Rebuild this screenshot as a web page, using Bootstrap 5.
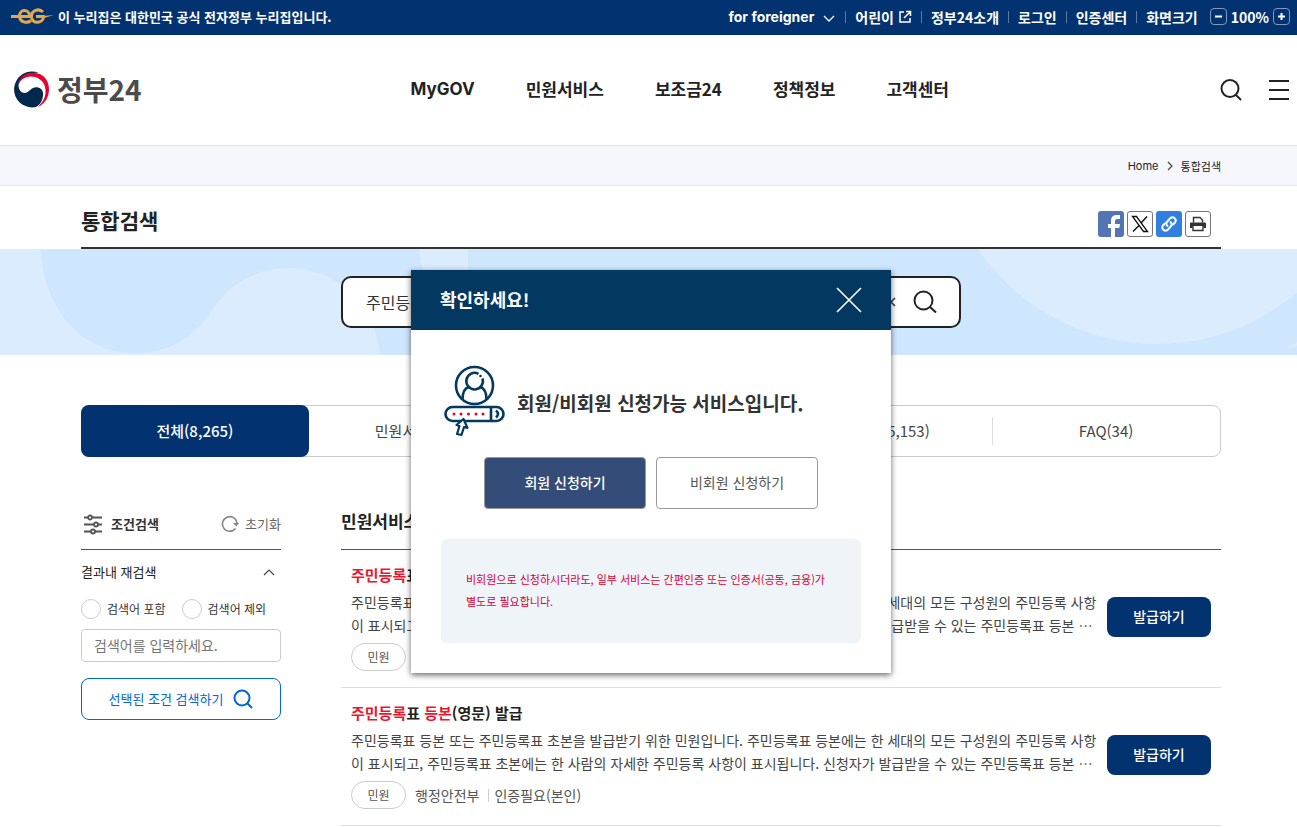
<!DOCTYPE html>
<html lang="ko">
<head>
<meta charset="utf-8">
<meta name="viewport" content="width=device-width, initial-scale=1">
<title>통합검색 | 정부24</title>
<link href="https://cdn.jsdelivr.net/npm/bootstrap@5.3.0/dist/css/bootstrap.min.css" rel="stylesheet">
<style>
  :root { --navy:#033270; --ink:#222; --text:#444; --line:#ddd; }
  body { font-family:"Noto Sans CJK KR",sans-serif; font-size:14px; line-height:20px; color:var(--ink); background:#fff; }
  a { color:inherit; text-decoration:none; }
  svg { display:block; flex:none; }
  .plain { background:none; border:0; padding:0; color:inherit; }
  .frame { max-width:1145px; margin:0 auto; padding-left:5px; }

  /* official notice bar */
  .gov-bar { background:var(--navy); color:#fff; min-height:35px; padding:0 7px 2px 11px; font-weight:700; }
  .gov-note { font-size:13px; }
  .gov-links li { display:flex; align-items:center; }
  .gov-links li + li::before { content:""; width:1px; height:12px; background:#5b7aa5; margin:0 9px; }
  .latin { font-family:Inter,"Noto Sans CJK KR",sans-serif; }
  .zoom-btn { width:17px; height:17px; border:1px solid #8299bb; border-radius:4px; display:grid; place-items:center; }

  /* main header */
  .site-head { height:110px; padding:0 8px 2px 12px; }
  .brand-name { font-size:28px; line-height:36px; font-weight:700; color:#4b4b4b; }
  .gnb { gap:51px; margin-left:269px; font-size:17px; font-weight:700; line-height:24px; }
  .crumbs { background:#f6f7fc; border-top:1px solid #e2e3e8; border-bottom:1px solid #e6e7ea; font-size:11px; }
  .crumbs ol { height:39px; gap:8px; }
  .title-row { height:63px; border-bottom:2px solid #333; padding:0 10px 1px 0; }
  .title-row h1 { font-size:21px; line-height:30px; font-weight:700; padding-top:8px; }
  .share { gap:3px; }
  .share button { width:26px; height:26px; border-radius:3px; display:grid; place-items:center; overflow:hidden; }
  .share .link-btn { background:#3180e0; }
  .share .boxed { border:1px solid #777; background:#fff; }

  /* search band */
  .band { background:#cfe6ff; padding:27px 0; }
  .band-art { position:absolute; inset:0; width:100%; height:100%; }
  .searchbox { width:620px; height:52px; margin:0 auto; border:2px solid var(--ink); border-radius:10px; background:#fff; padding:0 22px 0 23px; }
  .searchbox input { border:0; outline:0; min-width:0; font-size:16px; line-height:24px; color:#333; padding:0; }

  .tabs { height:52px; margin-top:50px; border:1px solid #ccc; border-radius:8px; font-size:15px; color:var(--text); }
  .tabs a { flex:1 1 0; display:flex; align-items:center; justify-content:center; position:relative; }
  .tabs a + a:not(:nth-child(2))::before { content:""; position:absolute; left:0; height:28px; border-left:1px solid var(--line); }
  .tabs a.on { background:var(--navy); color:#fff; border-radius:8px; margin:-1px 0 -1px -1px; font-weight:500; }

  .content { gap:60px; margin-top:42px; }
  .side { width:200px; flex:none; font-size:13px; }
  .sec-head { height:51px; border-bottom:1px solid #555; }
  .side-title { font-size:13px; font-weight:700; color:#333; }
  .reset { gap:6px; color:#666; }
  .side-label { height:43px; font-size:13px; padding-right:6px; }
  .picks { height:32px; margin-bottom:4px; }
  .pick { font-size:12px; gap:6px; color:#333; }
  .pick input { appearance:none; width:20px; height:20px; border:1px solid #ccc; border-radius:50%; margin:0; background:#fff; }
  .pick input:checked { border:6px solid #0067d4; }
  .side-input { height:33px; width:100%; border:1px solid #ccc; border-radius:4px; font-size:14px; padding:0 12px 2px; }
  .side-input::placeholder { color:#757575; }
  .side-go { height:42px; width:100%; border:1px solid #0067d4; border-radius:8px; background:#fff; color:#0067d4; font-size:13px; gap:10px; }

  .sec-head h2 { font-size:17px; line-height:26px; font-weight:700; padding-bottom:6px; }
  .hit { border-bottom:1px solid var(--line); padding:13px 10px 16px; gap:10px; }
  .hit h3 { font-size:15px; line-height:24px; font-weight:700; margin:0 0 4px; }
  .hit em { font-style:normal; color:#ee142f; }
  .hit p { line-height:23px; margin:0 0 6px; color:var(--text); word-break:break-all; }
  .tag { width:55px; height:28px; border:1px solid #ccc; border-radius:14px; font-size:12px; display:grid; place-items:center; color:#555; }
  .facts { gap:9px; color:#555; }
  .facts i { width:1px; height:13px; background:#ccc; margin-right:-4px; }
  .apply { flex:none; width:104px; height:40px; border-radius:8px; background:var(--navy); color:#fff; font-weight:500; padding-bottom:2px; }

  /* service dialog */
  .dialog-layer { position:absolute; top:270px; left:0; right:0; padding-left:5px; }
  .dialog-box { width:480px; margin:0 auto; background:#fff; box-shadow:0 2px 6px rgba(0,0,0,.6); }
  .dialog-top { height:60px; background:#033860; color:#fff; padding:0 29px; }
  .dialog-top h2 { font-size:18px; line-height:26px; font-weight:700; padding-bottom:2px; }
  .dialog-main { padding:35px 30px 30px; }
  .dialog-msg { gap:12px; padding-left:3px; font-size:19px; line-height:28px; font-weight:700; color:#333; }
  .choices { gap:10px; margin-top:20px; }
  .choice { width:162px; height:52px; border:1px solid #999; border-radius:4px; background:#fff; color:#555; padding-bottom:4px; }
  .choice.main-choice { background:#344d78; color:#fff; font-weight:500; }
  .notice { margin-top:30px; background:#eff4f9; border-radius:6px; padding:29px 25px 31px; font-size:11px; line-height:22px; color:#dc0032; }
</style>
</head>
<body>
<div class="gov-bar d-flex align-items-center justify-content-between">
  <div class="d-flex align-items-center gap-1 gov-note">
    <svg width="43" height="17" viewBox="0 0 43 17" fill="none" stroke="#e5a64d" stroke-width="3"><path d="M0 8.500H19M19 8.500C18 0 8 1 8.500 8.500C9 14 16 16 20 12.500"/><path d="M32 4C28 0 20 2 20.500 9C21 17 33 15 32.500 8.500H25"/><path d="M32 8L43 7L33 10Z" fill="#e5a64d" stroke="none"/></svg>
    <span>이 누리집은 대한민국 공식 전자정부 누리집입니다.</span>
  </div>
  <ul class="gov-links list-unstyled d-flex align-items-center mb-0">
    <li><button class="plain latin fw-bold d-flex align-items-center gap-2" type="button">for foreigner <svg width="14" height="14" viewBox="0 0 14 14" fill="none" stroke="#fff" stroke-width="1.300"><path d="M2 6l5 5 5-5"/></svg></button></li>
    <li><a href="#" class="d-flex align-items-center gap-1">어린이 <svg width="14" height="14" viewBox="0 0 14 14" fill="none" stroke="#fff" stroke-width="1.500"><path d="M6 2H2v10h10V8M8 1.500h4.500V6M12 2L6 8"/></svg></a></li>
    <li><a href="#">정부24소개</a></li>
    <li><a href="#">로그인</a></li>
    <li><a href="#">인증센터</a></li>
    <li><span>화면크기</span>
      <div class="d-flex align-items-center gap-1 ms-2 ps-1">
        <button class="plain zoom-btn" type="button" aria-label="화면 축소"><svg width="9" height="9" stroke="#fff" stroke-width="2"><path d="M1 4.500h7"/></svg></button>
        <span>100%</span>
        <button class="plain zoom-btn" type="button" aria-label="화면 확대"><svg width="9" height="9" stroke="#fff" stroke-width="2"><path d="M1 4.500h7M4.500 1v7"/></svg></button>
      </div></li>
  </ul>
</div>

<header class="site-head d-flex align-items-center">
  <a href="#" class="d-flex align-items-center gap-2">
    <svg width="37" height="37" viewBox="0 0 37 37"><path fill="#00294d" d="M27 1.800A18 18 0 1 0 24 36C29 34 31.500 27 31 22C30.500 17 25 15 21 17C17 19 16 22 12.500 22C8.500 22 6.500 18 6.500 14C7 6 16 1 27 1.800Z"/><path fill="#e6002d" d="M6.500 15C6.500 6 14 1.500 21 1.800C31 2 37 9 37 18C37 26 33 33 26 36C31 31 34 26 33.500 19C33 10 26 5.500 19 5.500C12 5.500 7 10 6.500 15Z"/></svg>
    <span class="brand-name">정부24</span>
  </a>
  <nav class="gnb d-flex" aria-label="주 메뉴">
    <a href="#" class="latin">MyGOV</a><a href="#">민원서비스</a><a href="#">보조금24</a><a href="#">정책정보</a><a href="#">고객센터</a>
  </nav>
  <div class="d-flex align-items-center ms-auto">
    <button class="plain me-4" type="button" aria-label="검색"><svg width="24" height="24" viewBox="0 0 24 24" fill="none" stroke="#222" stroke-width="2"><circle cx="11" cy="11.500" r="8.500"/><path d="M17 18l5 5"/></svg></button>
    <button class="plain" type="button" aria-label="전체 메뉴"><svg width="22" height="22" stroke="#222" stroke-width="2"><path d="M2 3h20M2 12h20M2 21h20"/></svg></button>
  </div>
</header>

<nav class="crumbs" aria-label="현재 위치"><div class="frame">
  <ol class="list-unstyled d-flex align-items-center justify-content-end mb-0">
    <li><a href="#" class="latin">Home</a></li>
    <li><svg width="6" height="10" fill="none" stroke="#444" stroke-width="1.200"><path d="M1 1l4 4-4 4"/></svg></li>
    <li>통합검색</li>
  </ol>
</div></nav>

<main>
  <div class="frame"><div class="title-row d-flex justify-content-between align-items-center">
    <h1 class="mb-0">통합검색</h1>
    <div class="share d-flex pt-3">
      <button class="plain" type="button" aria-label="페이스북"><svg width="26" height="26" viewBox="0 0 26 26"><path fill="#5375b3" d="M0 0h26v26H0z"/><path fill="#fff" d="M13 26V17h-3v-4h3v-3c0-4 2-6 6-6h3v4h-2c-2 0-3 .600-3 2.500V13h5l-.700 4H17v9z"/></svg></button>
      <button class="plain boxed" type="button" aria-label="엑스"><svg width="18" height="18" viewBox="0 0 18 18" fill="none" stroke="#111"><path stroke-width="1.300" d="M1.500 1.500h4l11 15h-4z"/><path stroke-width="1.500" d="M16 1.500L10 8M8 10.500L2 16.500"/></svg></button>
      <button class="plain link-btn" type="button" aria-label="링크 복사"><svg width="18" height="18" viewBox="0 0 18 18" fill="none" stroke="#fff" stroke-width="2" stroke-linecap="round"><path d="M7.500 11c-1.500-1.200-1.500-3.200-.200-4.500l3-3.300a3.200 3.200 0 0 1 4.700 4.300l-2 2.200"/><path d="M10.500 7c1.500 1.200 1.500 3.200.200 4.500l-3 3.300a3.200 3.200 0 0 1-4.700-4.300l2-2.200"/></svg></button>
      <button class="plain boxed" type="button" aria-label="인쇄"><svg width="16" height="16" viewBox="0 0 16 16"><path fill="#333" d="M0 7.500q0-1 1-1h14q1 0 1 1V12h-2.500v-2h-11v2H0z"/><path fill="none" stroke="#333" stroke-width="1.400" d="M3.500 6.500v-5h6.500l2.500 2.500v2.500M3 10v4.500h10V10"/></svg></button>
    </div>
  </div></div>

  <section class="band position-relative">
    <svg class="band-art" viewBox="0 0 1297 106" preserveAspectRatio="xMidYMid slice" aria-hidden="true"><g fill="#dbecff"><path d="M0 0H41C43 62 84 104 133 104C168 104 192 90 210 64C228 36 254 19 288 19C334 19 375 52 380 106H0Z"/><path d="M419 0Q420 12 424 24H468V0Z"/><circle cx="1157" cy="-121" r="216"/><path d="M1284 100L1297 93V97Z"/></g></svg>
    <div class="frame position-relative"><form class="searchbox d-flex align-items-center">
      <input class="flex-grow-1" type="text" aria-label="통합검색어" value="주민등록등본">
      <button class="plain me-3" type="reset" aria-label="지우기"><svg width="12" height="12" stroke="#333" stroke-width="1.500"><path d="M2 2l8 8M10 2l-8 8"/></svg></button>
      <button class="plain" type="button" aria-label="검색"><svg width="24" height="24" viewBox="0 0 24 24" fill="none" stroke="#222" stroke-width="2"><circle cx="10.500" cy="10.500" r="9"/><path d="M17 17l6 5.500"/></svg></button>
    </form></div>
  </section>

  <div class="frame">
    <nav class="tabs d-flex" aria-label="검색 분류">
      <a href="#" class="on" aria-current="page">전체(8,265)</a><a href="#">민원서비스(77)</a><a href="#">보조금24(0)</a><a href="#">정책정보(5,153)</a><a href="#">FAQ(34)</a>
    </nav>

    <div class="content d-flex align-items-start">
      <aside class="side">
        <div class="sec-head d-flex align-items-center justify-content-between">
          <span class="side-title d-flex align-items-center gap-2"><svg width="22" height="22" viewBox="0 0 22 22" fill="#fff" stroke="#555" stroke-width="1.800"><path d="M3 4.500h18M3 11.500h18M3 18.500h18"/><circle cx="9" cy="4.500" r="2"/><circle cx="15" cy="11.500" r="2"/><circle cx="12" cy="18.500" r="2"/></svg>조건검색</span>
          <button class="plain reset d-flex align-items-center" type="button"><svg width="18" height="18" viewBox="0 0 18 18" fill="none" stroke="#888" stroke-width="1.600"><path d="M14.500 13.500A7.300 7.300 0 1 1 16 8"/><path fill="#888" stroke="none" d="M12 8h6l-2.500 3.500z"/></svg>초기화</button>
        </div>
        <div class="side-label d-flex align-items-center justify-content-between">결과내 재검색
          <button class="plain" type="button" aria-label="접기"><svg width="12" height="8" fill="none" stroke="#444" stroke-width="1.200"><path d="M1 7l5-5 5 5"/></svg></button></div>
        <div class="picks d-flex gap-3">
          <label class="pick d-flex align-items-center"><input type="radio" name="scope">검색어 포함</label>
          <label class="pick d-flex align-items-center"><input type="radio" name="scope">검색어 제외</label>
        </div>
        <input class="side-input d-block" type="text" placeholder="검색어를 입력하세요." aria-label="재검색어">
        <button class="side-go mt-3 d-flex align-items-center justify-content-center" type="button">선택된 조건 검색하기<svg width="20" height="20" viewBox="0 0 20 20" fill="none" stroke="#0067d4" stroke-width="2"><circle cx="9" cy="9" r="7.500"/><path d="M14 14l5 5"/></svg></button>
      </aside>

      <section class="flex-grow-1">
        <div class="sec-head d-flex align-items-center"><h2 class="mb-0">민원서비스</h2></div>
        <article class="hit d-flex align-items-center">
          <div class="flex-grow-1">
            <h3><a href="#"><em>주민등록</em>표 <em>등본</em>(초본) 발급</a></h3>
            <p>주민등록표 등본 또는 주민등록표 초본을 발급받기 위한 민원입니다. 주민등록표 등본에는 한 세대의 모든 구성원의 주민등록 사항이 표시되고, 주민등록표 초본에는 한 사람의 자세한 주민등록 사항이 표시됩니다. 신청자가 발급받을 수 있는 주민등록표 등본 ⋯</p>
            <div class="facts d-flex align-items-center"><span class="tag">민원</span><span>행정안전부</span><i></i><span>인증필요(본인)</span></div>
          </div>
          <button class="plain apply" type="button">발급하기</button>
        </article>
        <article class="hit d-flex align-items-center">
          <div class="flex-grow-1">
            <h3><a href="#"><em>주민등록</em>표 <em>등본</em>(영문) 발급</a></h3>
            <p>주민등록표 등본 또는 주민등록표 초본을 발급받기 위한 민원입니다. 주민등록표 등본에는 한 세대의 모든 구성원의 주민등록 사항이 표시되고, 주민등록표 초본에는 한 사람의 자세한 주민등록 사항이 표시됩니다. 신청자가 발급받을 수 있는 주민등록표 등본 ⋯</p>
            <div class="facts d-flex align-items-center"><span class="tag">민원</span><span>행정안전부</span><i></i><span>인증필요(본인)</span></div>
          </div>
          <button class="plain apply" type="button">발급하기</button>
        </article>
      </section>
    </div>
  </div>
</main>

<div class="dialog-layer">
  <div class="dialog-box" role="dialog" aria-labelledby="dlgTitle">
    <div class="dialog-top d-flex align-items-center justify-content-between">
      <h2 class="mb-0" id="dlgTitle">확인하세요!</h2>
      <button class="plain" type="button" aria-label="닫기"><svg width="26" height="26" stroke="#fff" stroke-width="1.600"><path d="M1 1l24 24M25 1L1 25"/></svg></button>
    </div>
    <div class="dialog-main">
      <div class="dialog-msg d-flex align-items-center">
        <svg width="61" height="72" viewBox="0 0 61 72" fill="none" stroke="#033860" stroke-width="2.600">
          <circle cx="30.500" cy="20.500" r="18.500"/><path d="M34.500 8.800A8.300 8.300 0 1 0 38.500 13.500"/><circle cx="36.500" cy="11" r="1.300" fill="#033860" stroke="none"/><path d="M18.500 34.500C18.500 27 21 23 25 22M42.500 34.500C42.500 27 40 23 36 22"/>
          <rect x="1.500" y="42" width="58" height="14" rx="7" fill="#fff"/><path d="M47 42v14M52 45.500q4 3.500 0 7"/>
          <g fill="#e6002d" stroke="none"><circle cx="10" cy="49" r="1.500"/><circle cx="17" cy="49" r="1.500"/><circle cx="24.500" cy="49" r="1.500"/><circle cx="32" cy="49" r="1.500"/><circle cx="39" cy="49" r="1.500"/></g>
          <path fill="#fff" stroke-width="2.200" stroke-linejoin="round" d="M19.500 54l-7 6 3 1-2.500 8 4.500 1 2.500-8 3.500 1z"/>
        </svg>
        <span class="pt-1">회원/비회원 신청가능 서비스입니다.</span>
      </div>
      <div class="choices d-flex justify-content-center">
        <button class="choice main-choice" type="button">회원 신청하기</button>
        <button class="choice" type="button">비회원 신청하기</button>
      </div>
      <div class="notice">비회원으로 신청하시더라도, 일부 서비스는 간편인증 또는 인증서(공동, 금융)가 별도로 필요합니다.</div>
    </div>
  </div>
</div>
<script src="https://cdn.jsdelivr.net/npm/bootstrap@5.3.0/dist/js/bootstrap.bundle.min.js"></script>
</body>
</html>
